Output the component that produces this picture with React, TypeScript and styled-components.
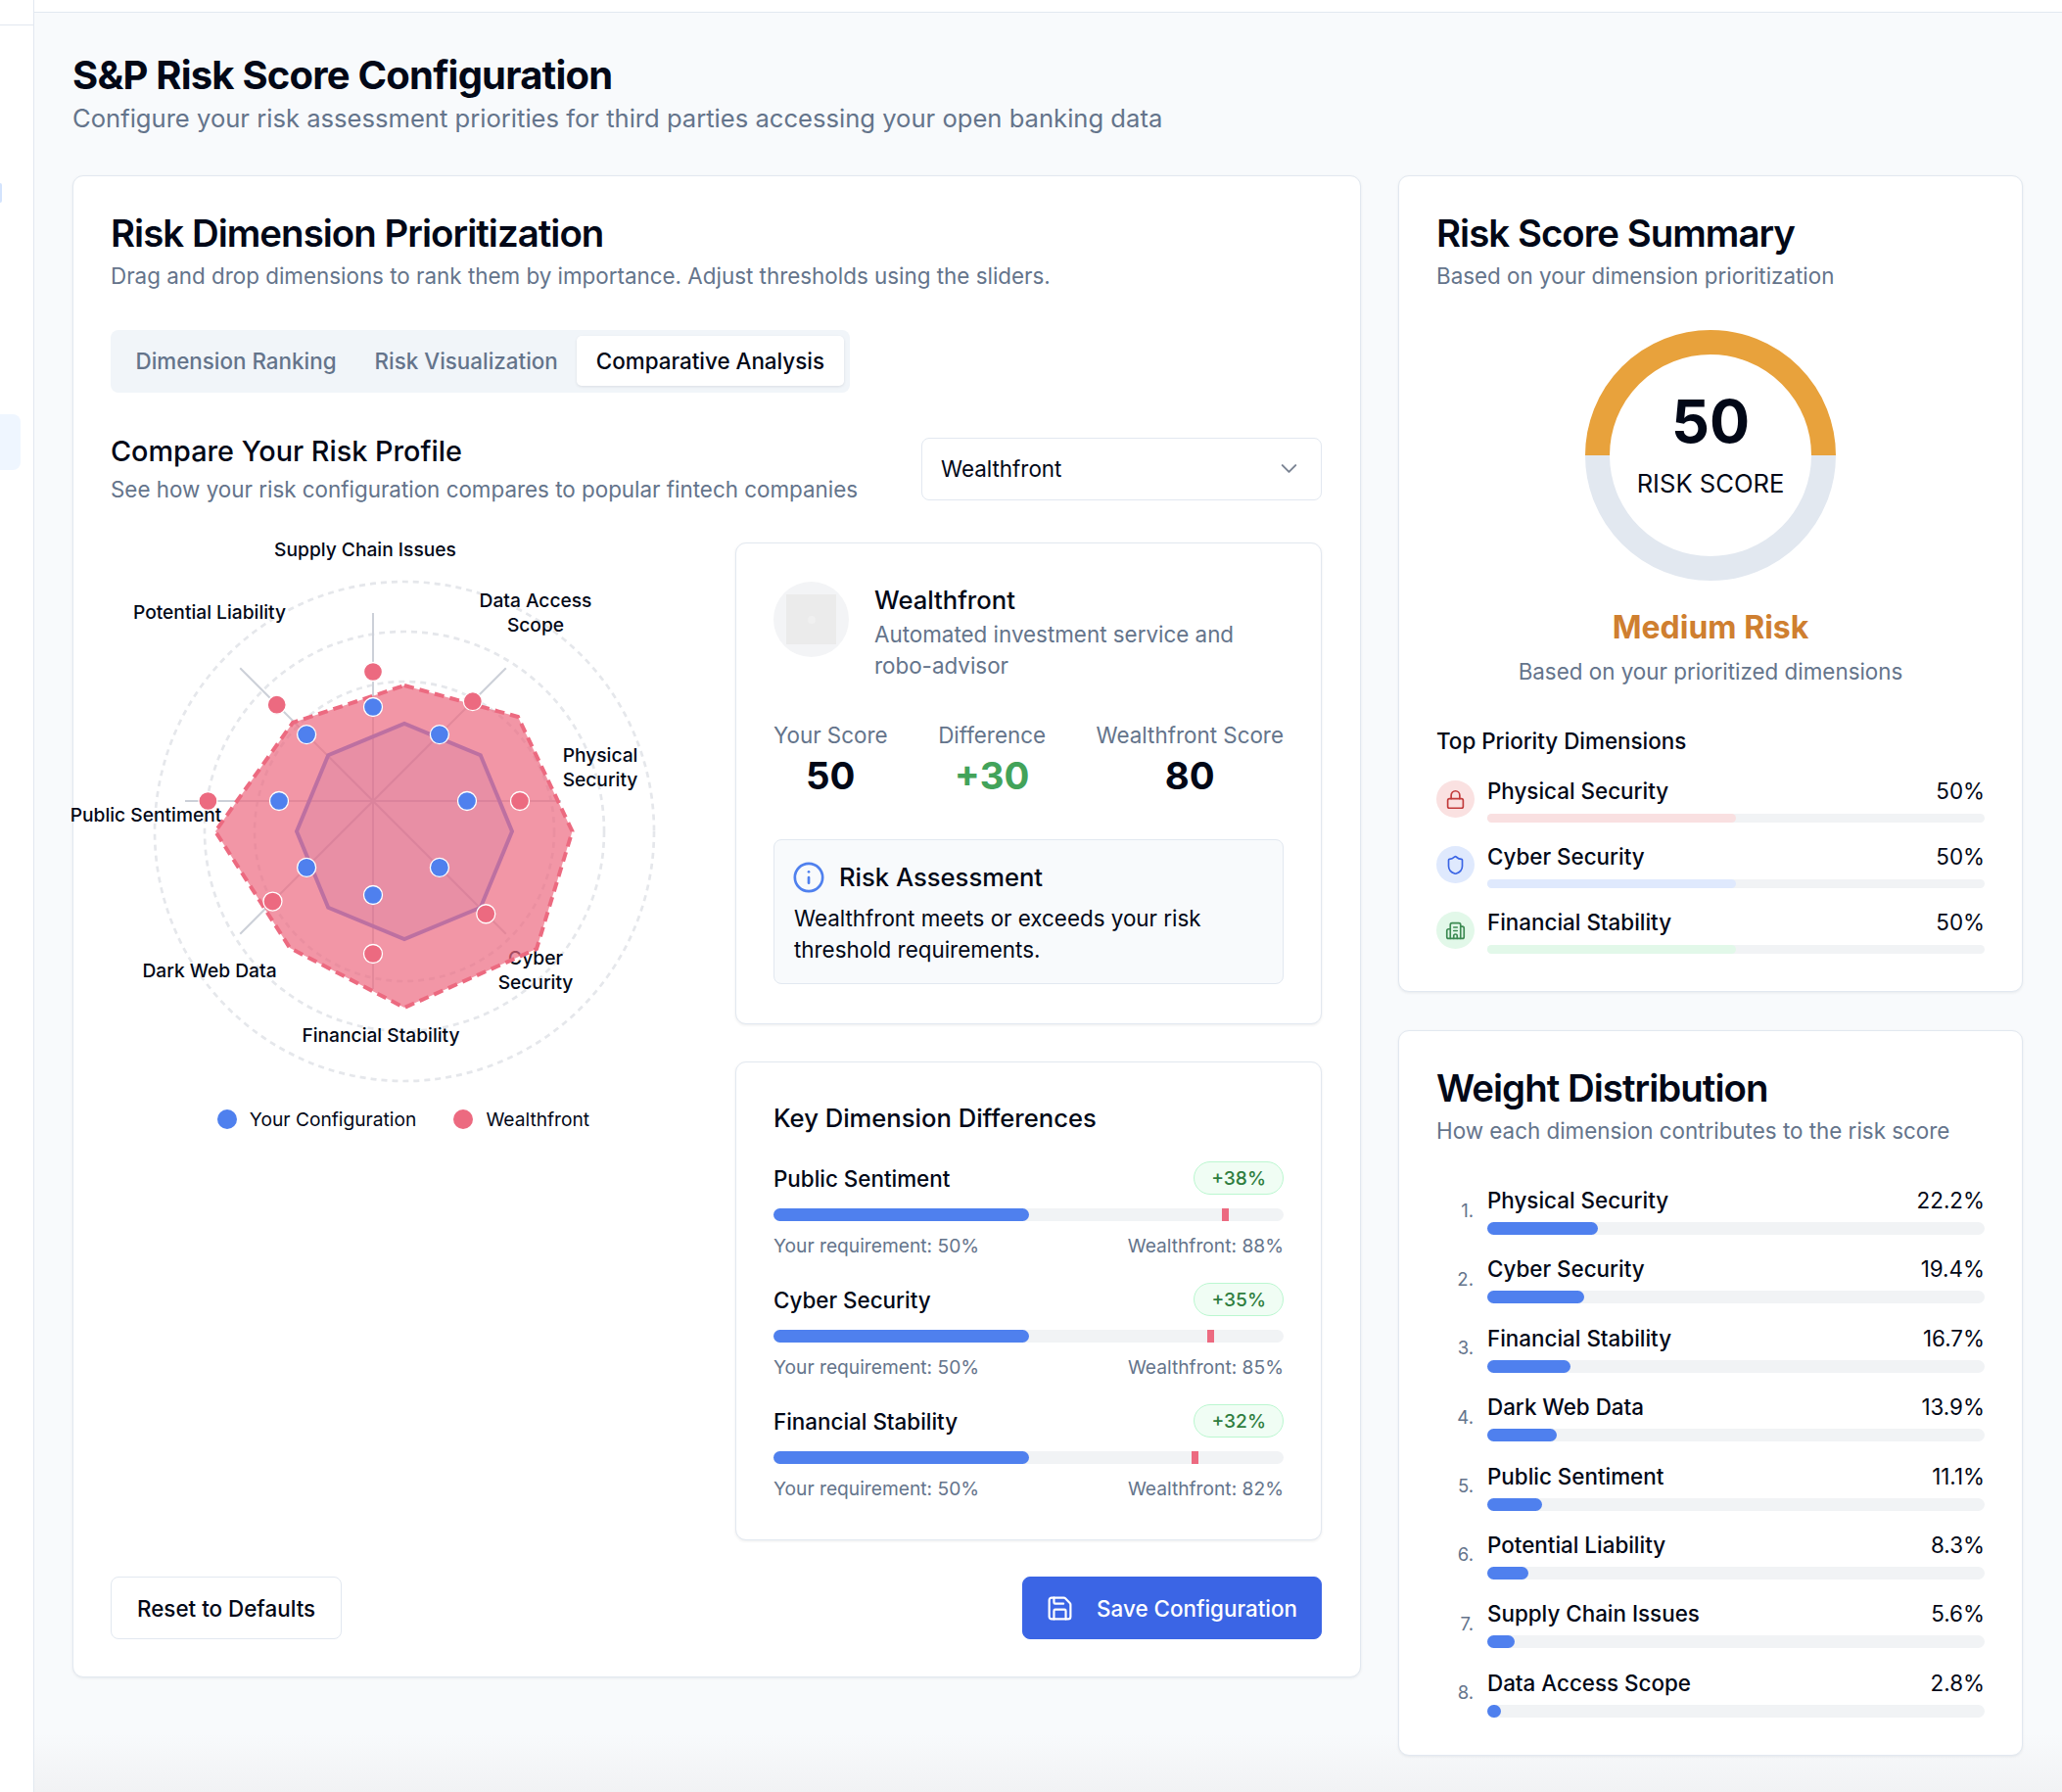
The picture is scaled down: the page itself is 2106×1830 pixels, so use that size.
import React from 'react';
import styled, { createGlobalStyle } from 'styled-components';
import { Building2, ChevronDown, Info, Lock, Save, Shield } from 'lucide-react';

const colors = {
  ink: '#020817',
  muted: '#64748b',
  border: '#e2e8f0',
  track: '#f1f3f5',
  blue: '#4f80ee',
  red: '#ec6a80',
};

const GlobalStyle = createGlobalStyle`
  * { box-sizing: border-box; }
  html, body { margin: 0; padding: 0; }
  body {
    font-family: Inter, "Noto Sans", sans-serif;
    color: ${colors.ink};
    background: #f8fafc;
  }
`;

const Page = styled.div`
  display: flex;
  width: 2106px;
  height: 1830px;
  overflow: hidden;
  background: linear-gradient(to bottom, #f8fafc 0, #f8fafc 1770px, #f1f2f4 1830px);
`;

const Sidebar = styled.aside`
  flex: 0 0 35px;
  background: #fff;
  border-right: 1px solid ${colors.border};
`;

const SidebarHead = styled.div`
  height: 26px;
  border-bottom: 1.5px solid ${colors.border};
`;

const SidebarTick = styled.div`
  width: 2px;
  height: 20px;
  margin-top: 161px;
  background: #d3e3fd;
  border-radius: 0 2px 2px 0;
`;

const SidebarActive = styled.div`
  width: 21px;
  height: 57px;
  margin-top: 216px;
  background: #eff6ff;
  border-radius: 0 8px 8px 0;
`;

const Main = styled.main`
  flex: 1;
  min-width: 0;
`;

const TopBar = styled.div`
  height: 13px;
  background: #fff;
  border-bottom: 1.5px solid ${colors.border};
`;

const Content = styled.div`
  padding: 40px 40px 0 39px;
`;

const PageTitle = styled.h1`
  margin: 0;
  font-size: 40px;
  line-height: 48px;
  font-weight: 700;
  letter-spacing: -0.02em;
`;

const PageSubtitle = styled.p`
  margin: 5px 0 0;
  font-size: 25.6px;
  line-height: 30px;
  color: ${colors.muted};
`;

const Columns = styled.div`
  display: grid;
  grid-template-columns: 1316px 638px;
  column-gap: 38px;
  margin-top: 43px;
  align-items: start;
`;

const Side = styled.div`
  display: flex;
  flex-direction: column;
  gap: 39px;
`;

const Card = styled.section`
  background: #fff;
  border: 1px solid ${colors.border};
  border-radius: 11px;
  padding: 36px 38px 38px;
  box-shadow: 0 1px 3px rgba(15, 23, 42, 0.07);
`;

const MainCard = styled(Card)`
  padding-right: 39px;
`;

const CardTitle = styled.h2`
  margin: 0;
  font-size: 38.4px;
  line-height: 44px;
  font-weight: 600;
  letter-spacing: -0.025em;
`;

const CardSubtitle = styled.p`
  margin: 8px 0 0;
  font-size: 22.4px;
  line-height: 28px;
  color: ${colors.muted};
`;

const Tabs = styled.div`
  display: inline-flex;
  height: 64px;
  margin-top: 41px;
  padding: 6px 6px 7px;
  background: #f1f5f9;
  border-radius: 8px;
`;

const Tab = styled.div<{ $active?: boolean }>`
  display: flex;
  align-items: center;
  padding: 0 19.5px;
  font-size: 22.4px;
  font-weight: 500;
  border-radius: 5px;
  color: ${(p) => (p.$active ? colors.ink : colors.muted)};
  background: ${(p) => (p.$active ? '#fff' : 'transparent')};
  box-shadow: ${(p) => (p.$active ? '0 1px 3px rgba(15, 23, 42, 0.1)' : 'none')};
`;

const CompareHead = styled.div`
  display: flex;
  justify-content: space-between;
  align-items: center;
  margin-top: 43px;
`;

const CompareTitle = styled.h3`
  margin: 0;
  font-size: 28.8px;
  line-height: 34px;
  font-weight: 500;
`;

const CompareText = styled.p`
  margin: 8px 0 0;
  font-size: 22.4px;
  line-height: 28px;
  color: ${colors.muted};
`;

const Select = styled.div`
  display: flex;
  justify-content: space-between;
  align-items: center;
  width: 409px;
  height: 64px;
  padding: 0 19px 1px;
  font-size: 22.4px;
  border: 1px solid ${colors.border};
  border-radius: 8px;
  background: #fff;
  color: ${colors.ink};
  svg { color: #7b8494; }
`;

const CompareGrid = styled.div`
  display: grid;
  grid-template-columns: 598px 599px;
  column-gap: 40px;
  margin-top: 40px;
`;

const ChartColumn = styled.div`
  display: flex;
  flex-direction: column;
`;

const ChartSvg = styled.svg`
  display: block;
  width: 598px;
  height: 570px;
  overflow: visible;
`;

const ChartLabel = styled.text`
  font-family: Inter, sans-serif;
  font-size: 19.2px;
  font-weight: 500;
  fill: ${colors.ink};
  text-anchor: middle;
  dominant-baseline: central;
`;

const Legend = styled.div`
  display: flex;
  justify-content: center;
  gap: 38px;
  margin-top: 4px;
`;

const LegendItem = styled.div`
  display: flex;
  align-items: center;
  gap: 13px;
  font-size: 19.2px;
  line-height: 30px;
`;

const LegendDot = styled.span<{ $color: string }>`
  width: 20px;
  height: 20px;
  border-radius: 50%;
  background: ${(p) => p.$color};
`;

const DetailColumn = styled.div`
  display: flex;
  flex-direction: column;
  gap: 38px;
`;

const DetailCard = styled.div<{ $top: number; $bottom: number }>`
  background: #fff;
  border: 1px solid ${colors.border};
  border-radius: 11px;
  padding: ${(p) => p.$top}px 38px ${(p) => p.$bottom}px;
  box-shadow: 0 1px 3px rgba(15, 23, 42, 0.08);
`;

const CompanyHead = styled.div`
  display: flex;
  gap: 26px;
`;

const CompanyLogo = styled.div`
  flex: 0 0 77px;
  height: 77px;
  display: flex;
  align-items: center;
  justify-content: center;
  border-radius: 50%;
  background: #f3f4f6;
`;

const LogoPlaceholder = styled.div`
  width: 51px;
  height: 51px;
  background: #ebebeb;
  display: flex;
  align-items: center;
  justify-content: center;
  &::after {
    content: '';
    width: 8px;
    height: 8px;
    border-radius: 50%;
    background: #f0f0f0;
  }
`;

const CompanyName = styled.div`
  font-size: 25.6px;
  line-height: 38px;
  font-weight: 500;
`;

const CompanyText = styled.div`
  font-size: 22.4px;
  line-height: 32px;
  color: ${colors.muted};
`;

const Stats = styled.div`
  display: flex;
  justify-content: space-between;
  margin-top: 41px;
`;

const Stat = styled.div`
  display: flex;
  flex-direction: column;
  align-items: center;
`;

const StatLabel = styled.div`
  font-size: 22.4px;
  line-height: 28px;
  color: ${colors.muted};
`;

const StatValue = styled.div<{ $green?: boolean }>`
  margin-top: 3px;
  font-size: 38.4px;
  line-height: 48px;
  font-weight: 700;
  color: ${(p) => (p.$green ? '#43a35a' : colors.ink)};
`;

const Assessment = styled.div`
  margin-top: 41px;
  padding: 22px 20px 18px;
  background: #f8fafc;
  border: 1px solid ${colors.border};
  border-radius: 8px;
`;

const AssessmentHead = styled.div`
  display: flex;
  align-items: center;
  gap: 14px;
  height: 32px;
  font-size: 25.6px;
  line-height: 32px;
  font-weight: 500;
  svg {
    margin-left: -2px;
    color: ${colors.blue};
  }
`;

const AssessmentText = styled.div`
  margin-top: 10px;
  font-size: 22.4px;
  line-height: 32px;
`;

const DiffTitle = styled.div`
  font-size: 25.6px;
  line-height: 34px;
  font-weight: 500;
`;

const DiffList = styled.div`
  display: flex;
  flex-direction: column;
  gap: 25px;
  margin-top: 27px;
`;

const DiffHead = styled.div`
  display: flex;
  justify-content: space-between;
  align-items: center;
  height: 34px;
  font-size: 22.4px;
  font-weight: 500;
`;

const Badge = styled.span`
  display: inline-flex;
  align-items: center;
  height: 34px;
  padding: 0 17px;
  font-size: 19.2px;
  font-weight: 500;
  color: #2f7d3f;
  background: #f0fdf4;
  border: 1px solid #bbf7d0;
  border-radius: 17px;
`;

const Track = styled.div<{ $height: number }>`
  position: relative;
  height: ${(p) => p.$height}px;
  border-radius: ${(p) => p.$height / 2}px;
  background: ${colors.track};
`;

const Fill = styled.div<{ $color: string }>`
  height: 100%;
  border-radius: inherit;
  background: ${(p) => p.$color};
`;

const Tick = styled.div`
  position: absolute;
  top: 0;
  bottom: 0;
  width: 7px;
  background: ${colors.red};
`;

const DiffBar = styled.div`
  margin-top: 14px;
`;

const DiffCaption = styled.div`
  display: flex;
  justify-content: space-between;
  margin-top: 12px;
  font-size: 19.2px;
  line-height: 26px;
  color: ${colors.muted};
`;

const Actions = styled.div`
  display: flex;
  justify-content: space-between;
  margin-top: 37px;
`;

const Button = styled.button<{ $primary?: boolean }>`
  display: flex;
  align-items: center;
  gap: 23px;
  height: 64px;
  padding: ${(p) => (p.$primary ? '0 24px 0 23px' : '0 26px')};
  font-family: inherit;
  font-size: 22.4px;
  font-weight: 500;
  border-radius: 8px;
  border: 1px solid ${(p) => (p.$primary ? '#3b65e5' : colors.border)};
  background: ${(p) => (p.$primary ? '#3b65e5' : '#fff')};
  color: ${(p) => (p.$primary ? '#fff' : colors.ink)};
`;

const RingBox = styled.div`
  position: relative;
  width: 256px;
  height: 256px;
  margin: 41px auto 0;
`;

const RingText = styled.div`
  position: absolute;
  inset: 0;
  display: flex;
  flex-direction: column;
  align-items: center;
  padding-top: 58px;
`;

const RingValue = styled.div`
  font-size: 61px;
  line-height: 70px;
  font-weight: 700;
`;

const RingLabel = styled.div`
  margin-top: 13px;
  font-size: 25.6px;
  line-height: 32px;
`;

const RiskLevel = styled.div`
  margin-top: 28px;
  text-align: center;
  font-size: 32px;
  line-height: 40px;
  font-weight: 700;
  color: #cf7f30;
`;

const RiskNote = styled.div`
  margin-top: 11px;
  text-align: center;
  font-size: 22.4px;
  line-height: 28px;
  color: ${colors.muted};
`;

const PriorityTitle = styled.div`
  margin-top: 42px;
  font-size: 22.4px;
  line-height: 30px;
  font-weight: 500;
`;

const PriorityList = styled.div`
  display: flex;
  flex-direction: column;
  gap: 23px;
  margin-top: 24px;
`;

const PriorityRow = styled.div`
  display: flex;
  gap: 13px;
`;

const PriorityIcon = styled.div<{ $bg: string; $fg: string }>`
  flex: 0 0 39px;
  height: 38px;
  margin-top: 1px;
  display: flex;
  align-items: center;
  justify-content: center;
  border-radius: 50%;
  background: ${(p) => p.$bg};
  color: ${(p) => p.$fg};
`;

const PriorityBody = styled.div`
  flex: 1;
`;

const MetricHead = styled.div`
  display: flex;
  justify-content: space-between;
  font-size: 22.4px;
  line-height: 24px;
  font-weight: 500;
`;

const MetricValue = styled.span`
  font-weight: 400;
`;

const PriorityBar = styled.div`
  margin-top: 11px;
`;

const WeightList = styled.div`
  display: flex;
  flex-direction: column;
  gap: 21.4px;
  margin-top: 43px;
`;

const WeightRow = styled.div`
  display: flex;
  align-items: center;
  gap: 14px;
`;

const WeightRank = styled.div`
  flex: 0 0 38px;
  padding-bottom: 2px;
  text-align: right;
  font-size: 18.5px;
  color: ${colors.muted};
`;

const WeightBody = styled.div`
  flex: 1;
`;

const WeightHead = styled(MetricHead)`
  line-height: 28px;
`;

const WeightBar = styled.div`
  margin-top: 8px;
`;

const axes = [0, 45, 90, 135, 180, 225, 270, 315];
const CX = 381;
const CY = 818;

const polar = (angle: number, r: number, cx = CX, cy = CY) => {
  const a = (angle * Math.PI) / 180;
  return [cx + r * Math.cos(a), cy + r * Math.sin(a)];
};

const bluePolygon = axes.map((a) => polar(a, 110, 413, 849).join(',')).join(' ');
const redPolygon = '413,700 529,732 584.5,849 548,969 413,1029 296,968 220,849 299,738';

const redDots: [number, number][] = [
  [0, 150], [45, 163], [90, 156], [135, 145], [180, 168.6], [225, 139], [270, 132], [315, 144],
];

const chartLabels: [string, number, number][] = [
  ['Supply Chain Issues', 373, 560.5],
  ['Data Access', 547, 612.5],
  ['Scope', 547, 638],
  ['Potential Liability', 214, 625],
  ['Physical', 613, 771],
  ['Security', 613, 796],
  ['Public Sentiment', 149, 832],
  ['Cyber', 547, 978],
  ['Security', 547, 1003],
  ['Dark Web Data', 214, 990.5],
  ['Financial Stability', 389, 1056.5],
];

const RadarChart: React.FC = () => (
  <ChartSvg viewBox="113 554 598 570">
    {[255, 204, 153].map((r) => (
      <circle key={r} cx={413} cy={849} r={r} fill="none" stroke="#e5e7eb" strokeWidth={2.7} strokeDasharray="6 5" />
    ))}
    {axes.map((a) => {
      const [x, y] = polar(a, 192);
      return <line key={a} x1={CX} y1={CY} x2={x} y2={y} stroke="#ccd0d8" strokeWidth={2} />;
    })}
    {chartLabels.map(([label, x, y]) => (
      <ChartLabel key={`${label}-${x}`} x={x} y={y}>{label}</ChartLabel>
    ))}
    <polygon points={bluePolygon} fill={colors.blue} fillOpacity={0.2} stroke={colors.blue} strokeWidth={4} />
    <polygon points={redPolygon} fill={colors.red} fillOpacity={0.7} stroke={colors.red} strokeWidth={4} strokeDasharray="10 6" />
    {axes.map((a) => {
      const [x, y] = polar(a, 96);
      return <circle key={a} cx={x} cy={y} r={9.5} fill={colors.blue} stroke="#fff" strokeWidth={1.3} />;
    })}
    {redDots.map(([a, r]) => {
      const [x, y] = polar(a, r);
      return <circle key={a} cx={x} cy={y} r={9.5} fill={colors.red} stroke="#fff" strokeWidth={1.3} />;
    })}
  </ChartSvg>
);

const RiskRing: React.FC = () => (
  <RingBox>
    <svg width="256" height="256" viewBox="0 0 256 256">
      <path d="M12.5 128a115.5 115.5 0 0 0 231 0" fill="none" stroke="#e2e8f0" strokeWidth="25" />
      <path d="M12.5 128a115.5 115.5 0 0 1 231 0" fill="none" stroke="#e8a23c" strokeWidth="25" />
    </svg>
    <RingText>
      <RingValue>50</RingValue>
      <RingLabel>RISK SCORE</RingLabel>
    </RingText>
  </RingBox>
);

const differences = [
  { name: 'Public Sentiment', diff: 38, value: 88 },
  { name: 'Cyber Security', diff: 35, value: 85 },
  { name: 'Financial Stability', diff: 32, value: 82 },
];

const priorities = [
  { name: 'Physical Security', icon: Lock, bg: '#fae1e1', fg: '#c23b3b', bar: '#f9e0e1' },
  { name: 'Cyber Security', icon: Shield, bg: '#dfe9fd', fg: '#3b65e5', bar: '#dfe9fd' },
  { name: 'Financial Stability', icon: Building2, bg: '#e2f8e9', fg: '#3c8a52', bar: '#e2f8e9' },
];

const weights = [
  ['Physical Security', 22.2],
  ['Cyber Security', 19.4],
  ['Financial Stability', 16.7],
  ['Dark Web Data', 13.9],
  ['Public Sentiment', 11.1],
  ['Potential Liability', 8.3],
  ['Supply Chain Issues', 5.6],
  ['Data Access Scope', 2.8],
] as const;

const App: React.FC = () => (
  <>
    <GlobalStyle />
    <Page>
      <Sidebar>
        <SidebarHead />
        <SidebarTick />
        <SidebarActive />
      </Sidebar>
      <Main>
        <TopBar />
        <Content>
          <PageTitle>S&amp;P Risk Score Configuration</PageTitle>
          <PageSubtitle>Configure your risk assessment priorities for third parties accessing your open banking data</PageSubtitle>
          <Columns>
            <MainCard>
              <CardTitle>Risk Dimension Prioritization</CardTitle>
              <CardSubtitle>Drag and drop dimensions to rank them by importance. Adjust thresholds using the sliders.</CardSubtitle>
              <Tabs>
                <Tab>Dimension Ranking</Tab>
                <Tab>Risk Visualization</Tab>
                <Tab $active>Comparative Analysis</Tab>
              </Tabs>
              <CompareHead>
                <div>
                  <CompareTitle>Compare Your Risk Profile</CompareTitle>
                  <CompareText>See how your risk configuration compares to popular fintech companies</CompareText>
                </div>
                <Select>
                  Wealthfront
                  <ChevronDown size={27} strokeWidth={1.8} />
                </Select>
              </CompareHead>
              <CompareGrid>
                <ChartColumn>
                  <RadarChart />
                  <Legend>
                    <LegendItem><LegendDot $color={colors.blue} />Your Configuration</LegendItem>
                    <LegendItem><LegendDot $color={colors.red} />Wealthfront</LegendItem>
                  </Legend>
                </ChartColumn>
                <DetailColumn>
                  <DetailCard $top={39} $bottom={40}>
                    <CompanyHead>
                      <CompanyLogo><LogoPlaceholder /></CompanyLogo>
                      <div>
                        <CompanyName>Wealthfront</CompanyName>
                        <CompanyText>Automated investment service and robo-advisor</CompanyText>
                      </div>
                    </CompanyHead>
                    <Stats>
                      <Stat><StatLabel>Your Score</StatLabel><StatValue>50</StatValue></Stat>
                      <Stat><StatLabel>Difference</StatLabel><StatValue $green>+30</StatValue></Stat>
                      <Stat><StatLabel>Wealthfront Score</StatLabel><StatValue>80</StatValue></Stat>
                    </Stats>
                    <Assessment>
                      <AssessmentHead><Info size={34} strokeWidth={1.9} />Risk Assessment</AssessmentHead>
                      <AssessmentText>Wealthfront meets or exceeds your risk threshold requirements.</AssessmentText>
                    </Assessment>
                  </DetailCard>
                  <DetailCard $top={40} $bottom={39}>
                    <DiffTitle>Key Dimension Differences</DiffTitle>
                    <DiffList>
                      {differences.map((d) => (
                        <div key={d.name}>
                          <DiffHead>{d.name}<Badge>+{d.diff}%</Badge></DiffHead>
                          <DiffBar>
                            <Track $height={13}>
                              <Fill $color={colors.blue} style={{ width: '50%' }} />
                              <Tick style={{ left: `${d.value}%` }} />
                            </Track>
                          </DiffBar>
                          <DiffCaption>
                            <span>Your requirement: 50%</span>
                            <span>Wealthfront: {d.value}%</span>
                          </DiffCaption>
                        </div>
                      ))}
                    </DiffList>
                  </DetailCard>
                </DetailColumn>
              </CompareGrid>
              <Actions>
                <Button>Reset to Defaults</Button>
                <Button $primary><Save size={29} strokeWidth={1.8} />Save Configuration</Button>
              </Actions>
            </MainCard>
            <Side>
              <Card>
                <CardTitle>Risk Score Summary</CardTitle>
                <CardSubtitle>Based on your dimension prioritization</CardSubtitle>
                <RiskRing />
                <RiskLevel>Medium Risk</RiskLevel>
                <RiskNote>Based on your prioritized dimensions</RiskNote>
                <PriorityTitle>Top Priority Dimensions</PriorityTitle>
                <PriorityList>
                  {priorities.map(({ name, icon: Icon, bg, fg, bar }) => (
                    <PriorityRow key={name}>
                      <PriorityIcon $bg={bg} $fg={fg}><Icon size={21} strokeWidth={1.9} /></PriorityIcon>
                      <PriorityBody>
                        <MetricHead>{name}<MetricValue>50%</MetricValue></MetricHead>
                        <PriorityBar>
                          <Track $height={9}><Fill $color={bar} style={{ width: '50%' }} /></Track>
                        </PriorityBar>
                      </PriorityBody>
                    </PriorityRow>
                  ))}
                </PriorityList>
              </Card>
              <Card>
                <CardTitle>Weight Distribution</CardTitle>
                <CardSubtitle>How each dimension contributes to the risk score</CardSubtitle>
                <WeightList>
                  {weights.map(([name, pct], i) => (
                    <WeightRow key={name}>
                      <WeightRank>{i + 1}.</WeightRank>
                      <WeightBody>
                        <WeightHead>{name}<MetricValue>{pct}%</MetricValue></WeightHead>
                        <WeightBar>
                          <Track $height={13}><Fill $color={colors.blue} style={{ width: `${pct}%` }} /></Track>
                        </WeightBar>
                      </WeightBody>
                    </WeightRow>
                  ))}
                </WeightList>
              </Card>
            </Side>
          </Columns>
        </Content>
      </Main>
    </Page>
  </>
);

export default App;
